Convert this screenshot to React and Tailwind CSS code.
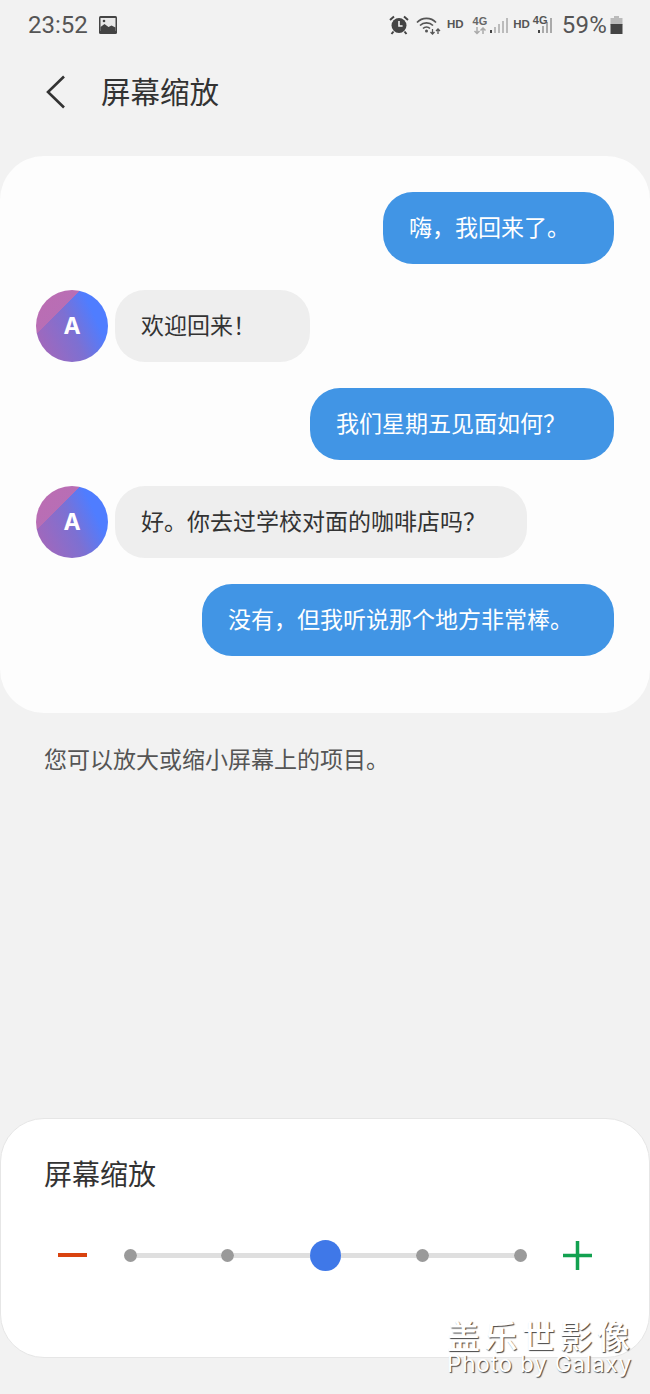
import React from 'react';

const cjk = "font-['Noto_Sans_CJK_SC','Noto_Sans',sans-serif]";

const Avatar = () => (
  <div className="w-[72px] h-[72px] rounded-full shrink-0 flex items-center justify-center bg-[linear-gradient(135deg,#bc6db2_0%,#b86eb5_31%,transparent_31%),linear-gradient(65deg,#a068bc_12%,#7d70d2_48%,#4f7dff_76%)]">
    <span className="text-white text-[23px] font-bold font-['Inter',sans-serif] pt-[1px]">A</span>
  </div>
);

const Sent = ({ width, children }) => (
  <div className="flex justify-end">
    <div className={`${width} h-[72px] rounded-[30px] bg-[#4195e5] text-white text-[23px] pl-[26px] pb-[4px] flex items-center whitespace-nowrap`}>
      {children}
    </div>
  </div>
);

const Received = ({ width, children }) => (
  <div className="flex items-center gap-[7px]">
    <Avatar />
    <div className={`${width} h-[72px] rounded-[30px] bg-[#eeeeee] text-[#333] text-[23px] pl-[26px] pb-[4px] flex items-center whitespace-nowrap`}>
      {children}
    </div>
  </div>
);

const Dot = () => <div className="w-[13px] h-[13px] rounded-full bg-[#9a9a9a] shrink-0" />;

const StatusIcons = () => (
  <div className="flex items-center text-[#555]">
    {/* alarm */}
    <svg width="20" height="20" viewBox="0 0 20 20" className="mr-[7px]">
      <circle cx="10" cy="10.5" r="7.5" fill="#444" />
      <path d="M10 6v5h3.6" stroke="#f2f2f2" strokeWidth="1.6" fill="none" />
      <path d="M1 5l4-3.5M19 5l-4-3.5" stroke="#444" strokeWidth="2" />
      <path d="M4.5 16.5l-2 2.5M15.5 16.5l2 2.5" stroke="#444" strokeWidth="2" />
    </svg>
    {/* wifi */}
    <svg width="25" height="20" viewBox="0 0 25 20" className="mr-[6px]">
      <path d="M1 7.5C6 2 15 2 20 7.5M4 10.5c3.500-3.500 9.500-3.500 13 0M7 13.500c2-2 5-2 7 0" stroke="#555" strokeWidth="1.700" fill="none" />
      <circle cx="10.500" cy="16" r="1.500" fill="#555" />
      <path d="M16.500 14v5M14.500 17l2 2 2-2M22 19v-5M20 16l2-2 2 2" stroke="#555" strokeWidth="1.300" fill="none" />
    </svg>
    <span className="text-[11.500px] font-bold font-['Liberation_Sans',sans-serif] mr-[9px]">HD</span>
    <div className="flex flex-col items-center mr-[3px] leading-none">
      <span className="text-[11px] font-bold font-['Liberation_Sans',sans-serif] leading-[11px] text-[#666]">4G</span>
      <svg width="14" height="8" viewBox="0 0 14 8">
        <path d="M4 0v6M1.500 4l2.500 2.500L6.500 4" stroke="#aaa" strokeWidth="1.500" fill="none" />
        <path d="M10 7V1M7.500 3.500L10 1l2.500 2.500" stroke="#aaa" strokeWidth="1.500" fill="none" />
      </svg>
    </div>
    <svg width="18" height="20" viewBox="0 0 18 20" className="mr-[5px]">
      <rect x="0" y="15" width="2" height="3" fill="#444" />
      <rect x="4" y="12" width="2" height="6" fill="#bbb" />
      <rect x="8" y="9" width="2" height="9" fill="#bbb" />
      <rect x="12" y="6" width="2" height="12" fill="#bbb" />
      <rect x="16" y="3" width="2" height="15" fill="#bbb" />
    </svg>
    <span className="text-[11.500px] font-bold font-['Liberation_Sans',sans-serif] mr-[3px]">HD</span>
    <div className="relative w-[21px] h-[20px] mr-[8px]">
      <svg width="21" height="20" viewBox="0 0 21 20">
        <rect x="5" y="15" width="2" height="3" fill="#444" />
        <rect x="9" y="11" width="2" height="7" fill="#aaa" />
        <rect x="13" y="7" width="2" height="11" fill="#aaa" />
        <rect x="17" y="3" width="2" height="15" fill="#aaa" />
      </svg>
      <span className="absolute left-0 top-0 text-[11px] leading-[11px] font-bold font-['Liberation_Sans',sans-serif] text-[#555]">4G</span>
    </div>
    <span className="text-[24px] leading-none font-['Roboto',sans-serif] tracking-[0.2px] mr-[3px]">59%</span>
    <svg width="13" height="20" viewBox="0 0 13 20">
      <rect x="4" y="1" width="5" height="3" fill="#bbb" />
      <rect x="0.500" y="3" width="12" height="7" fill="#bbb" />
      <rect x="0.500" y="9" width="12" height="10" fill="#444" />
    </svg>
  </div>
);

export default function App() {
  return (
    <div className={`relative w-[650px] h-[1394px] overflow-hidden bg-[#f2f2f2] flex flex-col ${cjk}`}>
      {/* status bar */}
      <div className="h-[50px] pl-[28px] pr-[27px] flex items-center justify-between">
        <div className="flex items-center gap-[11px]">
          <span className="text-[24px] text-[#555] leading-none font-['Roboto',sans-serif]">23:52</span>
          <svg width="18" height="18" viewBox="0 0 18 18">
            <rect width="18" height="18" rx="1.500" fill="#444" />
            <rect x="1.500" y="2" width="15" height="13" fill="#e9e9e9" />
            <path d="M1.500 16v-5l4-3 4 3 3-1.500 4 2V16z" fill="#444" />
            <circle cx="5" cy="5" r="1.300" fill="#444" />
          </svg>
        </div>
        <StatusIcons />
      </div>

      {/* header */}
      <div className="h-[84px] mb-[22px] flex items-center pl-[46px] gap-[35px]">
        <svg width="20" height="34" viewBox="0 0 20 34">
          <path d="M18 1.500L2 17l16 15.500" stroke="#333" strokeWidth="2.600" fill="none" />
        </svg>
        <h1 className="text-[29.500px] text-[#333] leading-none font-normal pb-[2px]">屏幕缩放</h1>
      </div>

      {/* preview */}
      <div className="h-[557px] rounded-[44px] bg-[#fdfdfd] pt-[36px] pl-[36px] pr-[36px] flex flex-col gap-[26px]">
        <Sent width="w-[231px]">嗨，我回来了。</Sent>
        <Received width="w-[195px]">欢迎回来！</Received>
        <Sent width="w-[304px]">我们星期五见面如何？</Sent>
        <Received width="w-[412px]">好。你去过学校对面的咖啡店吗？</Received>
        <Sent width="w-[412px]">没有，但我听说那个地方非常棒。</Sent>
      </div>

      <p className="mt-[29px] pl-[44px] text-[23px] leading-[32px] text-[#555]">您可以放大或缩小屏幕上的项目。</p>

      <div className="flex-1" />

      {/* zoom panel */}
      <div className="h-[240px] mb-[36px] rounded-[44px] bg-white border border-[#e6e6e6] px-[43px] pt-[34px]">
        <h2 className="text-[28px] leading-[40px] text-[#333] font-normal">屏幕缩放</h2>
        <div className="mt-[46px] flex items-center h-[32px]">
          <div className="w-[29px] ml-[14px] h-[4px] bg-[#d9430f] shrink-0" />
          <div className="flex items-center ml-[37px] mr-[36px] shrink-0">
            <Dot />
            <div className="w-[84px] h-[5px] bg-[#dfdfdf]" />
            <Dot />
            <div className="w-[76px] h-[5px] bg-[#dfdfdf]" />
            <div className="w-[31px] h-[31px] rounded-full bg-[#3f78e8] shrink-0" />
            <div className="w-[75px] h-[5px] bg-[#dfdfdf]" />
            <Dot />
            <div className="w-[85px] h-[5px] bg-[#dfdfdf]" />
            <Dot />
          </div>
          <svg width="29" height="29" viewBox="0 0 29 29" className="shrink-0">
            <path d="M0 14.500h29M14.500 0v29" stroke="#12a150" strokeWidth="3.500" />
          </svg>
        </div>
      </div>

      {/* watermark */}
      <div className="absolute right-[19px] top-[1317px] w-[184px] text-white [text-shadow:1px_1px_1px_#444] flex flex-col">
        <span className="text-[33px] leading-[36px] font-medium tracking-[4.500px] whitespace-nowrap">盖乐世影像</span>
        <span className="text-[22.500px] leading-[22px] tracking-[0.800px] whitespace-nowrap font-['Inter',sans-serif]">Photo by Galaxy</span>
      </div>
    </div>
  );
}
